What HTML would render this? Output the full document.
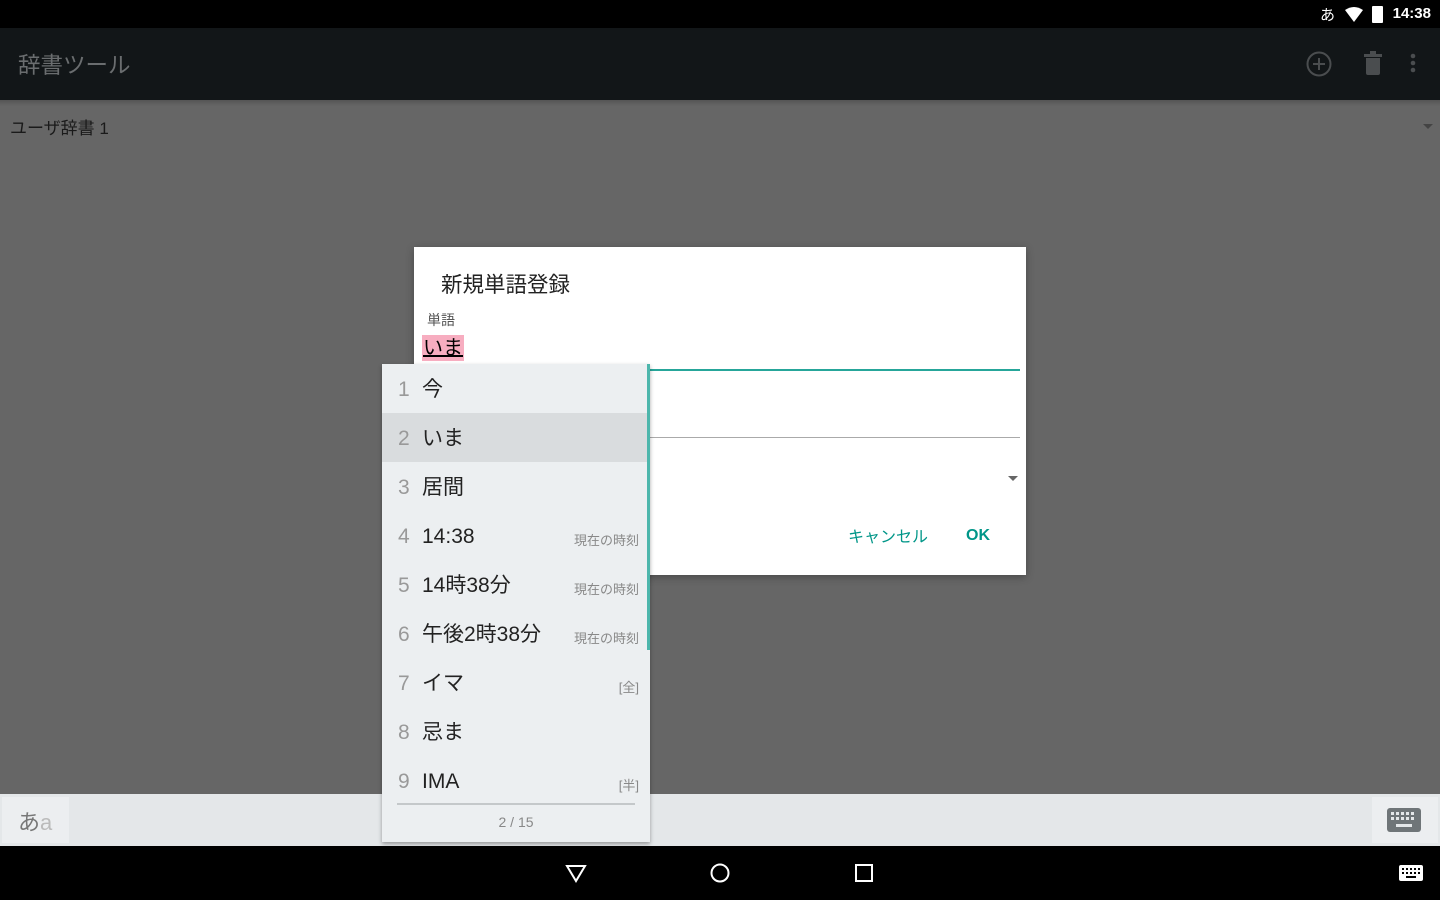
<!DOCTYPE html>
<html><head><meta charset="utf-8"><style>
*{margin:0;padding:0;box-sizing:border-box}
body{width:1440px;height:900px;position:relative;overflow:hidden;background:#666;font-family:"Liberation Sans","Noto Sans CJK JP",sans-serif}
.a{position:absolute}
</style></head><body>
<div class="a" style="left:0;top:0;width:1440px;height:28px;background:#000"></div>
<div class="a" style="right:9px;top:5px;color:#fff;font-size:15px;font-weight:bold">14:38</div>
<div class="a" style="left:1320px;top:4px;color:#fff;font-size:15px">あ</div>
<svg class="a" style="left:1344px;top:7px" width="20" height="16"><path d="M1 3 Q10 -3 19 3 L10 15Z" fill="#fff"/></svg>
<div class="a" style="left:1372px;top:6px;width:11px;height:17px;background:#fff;border-radius:1px"></div>
<div class="a" style="left:0;top:28px;width:1440px;height:72px;background:#121618"></div>
<div class="a" style="left:18px;top:48px;color:#6a6d6f;font-size:22.5px">辞書ツール</div>
<svg class="a" style="left:1305px;top:50px" width="28" height="28"><circle cx="14" cy="14" r="11.5" fill="none" stroke="#4a4d4f" stroke-width="2"/><path d="M14 8v12M8 14h12" stroke="#4a4d4f" stroke-width="2"/></svg>
<svg class="a" style="left:1362px;top:49px" width="22" height="28"><path d="M8 2h6v3h6v3H2V5h6z M4 9h14v15a2 2 0 0 1-2 2H6a2 2 0 0 1-2-2z" fill="#4a4d4f"/></svg>
<svg class="a" style="left:1408px;top:52px" width="10" height="24"><circle cx="5" cy="4" r="2.3" fill="#4a4d4f"/><circle cx="5" cy="11" r="2.3" fill="#4a4d4f"/><circle cx="5" cy="18" r="2.3" fill="#4a4d4f"/></svg>
<div class="a" style="left:0;top:100px;width:1440px;height:6px;background:linear-gradient(#555,#666)"></div>
<div class="a" style="left:10px;top:114px;color:#1a1a1a;font-size:17px">ユーザ辞書 1</div>
<div class="a" style="left:1423px;top:124px;width:0;height:0;border-left:5px solid transparent;border-right:5px solid transparent;border-top:5px solid #444"></div>

<div class="a" style="left:414px;top:247px;width:612px;height:328px;background:#fff;box-shadow:0 2px 8px rgba(0,0,0,.3)"></div>
<div class="a" style="left:441px;top:268px;color:#222;font-size:21.5px">新規単語登録</div>
<div class="a" style="left:427px;top:310px;color:#555;font-size:14px">単語</div>
<div class="a" style="left:422px;top:335px;height:26px;padding:0 1px;background:#f7adc0;color:#000;font-size:20px;line-height:26px;text-decoration:underline">いま</div>
<div class="a" style="left:648px;top:369px;width:372px;height:2px;background:#26a69a"></div>
<div class="a" style="left:648px;top:437px;width:372px;height:1px;background:#aaa"></div>
<div class="a" style="left:1008px;top:476px;width:0;height:0;border-left:5px solid transparent;border-right:5px solid transparent;border-top:5px solid #666"></div>
<div class="a" style="left:848px;top:523px;color:#009688;font-size:16px">キャンセル</div>
<div class="a" style="left:966px;top:527px;color:#009688;font-size:16px;font-weight:bold">OK</div>

<div class="a" style="left:0;top:794px;width:1440px;height:52px;background:#e4e7e9"></div>
<div class="a" style="left:2px;top:797px;width:67px;height:46px;background:#eceef0"></div>
<div class="a" style="left:18px;top:805px;font-size:22px;color:#777">あ<span style="color:#bbb">a</span></div>
<div class="a" style="left:1372px;top:797px;width:66px;height:46px;background:#eceef0"></div>
<svg class="a" style="left:1387px;top:808px" width="34" height="24"><rect width="34" height="24" rx="3" fill="#6f7578"/><g fill="#e4e7e9"><rect x="4" y="4" width="3" height="3"/><rect x="9" y="4" width="3" height="3"/><rect x="14" y="4" width="3" height="3"/><rect x="19" y="4" width="3" height="3"/><rect x="24" y="4" width="3" height="3"/><rect x="4" y="9" width="3" height="3"/><rect x="9" y="9" width="3" height="3"/><rect x="14" y="9" width="3" height="3"/><rect x="19" y="9" width="3" height="3"/><rect x="24" y="9" width="3" height="3"/><rect x="9" y="16" width="16" height="3"/></g></svg>

<div class="a" style="left:382px;top:364px;width:268px;height:478px;background:#eceff1;box-shadow:0 2px 4px rgba(0,0,0,.35)"></div>
<div class="a" style="left:382px;top:413px;width:265px;height:49px;background:#d9dcde"></div>
<div class="a" style="left:647px;top:364px;width:3px;height:286px;background:#4db6ac"></div>
<div class="a" style="left:382px;top:365px;width:265px;font-size:21px;color:#222">
<div style="position:relative;height:49px;line-height:49px"><span style="position:absolute;left:16px;color:#999">1</span><span style="position:absolute;left:40px">今</span></div>
<div style="position:relative;height:49px;line-height:49px"><span style="position:absolute;left:16px;color:#999">2</span><span style="position:absolute;left:40px">いま</span></div>
<div style="position:relative;height:49px;line-height:49px"><span style="position:absolute;left:16px;color:#999">3</span><span style="position:absolute;left:40px">居間</span></div>
<div style="position:relative;height:49px;line-height:49px"><span style="position:absolute;left:16px;color:#999">4</span><span style="position:absolute;left:40px">14:38</span><span style="position:absolute;right:8px;top:4px;font-size:13px;color:#888">現在の時刻</span></div>
<div style="position:relative;height:49px;line-height:49px"><span style="position:absolute;left:16px;color:#999">5</span><span style="position:absolute;left:40px">14時38分</span><span style="position:absolute;right:8px;top:4px;font-size:13px;color:#888">現在の時刻</span></div>
<div style="position:relative;height:49px;line-height:49px"><span style="position:absolute;left:16px;color:#999">6</span><span style="position:absolute;left:40px">午後2時38分</span><span style="position:absolute;right:8px;top:4px;font-size:13px;color:#888">現在の時刻</span></div>
<div style="position:relative;height:49px;line-height:49px"><span style="position:absolute;left:16px;color:#999">7</span><span style="position:absolute;left:40px">イマ</span><span style="position:absolute;right:8px;top:4px;font-size:13px;color:#888">[全]</span></div>
<div style="position:relative;height:49px;line-height:49px"><span style="position:absolute;left:16px;color:#999">8</span><span style="position:absolute;left:40px">忌ま</span></div>
<div style="position:relative;height:49px;line-height:49px"><span style="position:absolute;left:16px;color:#999">9</span><span style="position:absolute;left:40px">IMA</span><span style="position:absolute;right:8px;top:4px;font-size:13px;color:#888">[半]</span></div>
</div>
<div class="a" style="left:397px;top:803px;width:238px;height:2px;background:#c4c8ca"></div>
<div class="a" style="left:382px;top:814px;width:268px;text-align:center;font-size:14px;color:#888">2 / 15</div>

<div class="a" style="left:0;top:846px;width:1440px;height:54px;background:#000"></div>
<svg class="a" style="left:564px;top:862px" width="24" height="22"><path d="M3 4h18L12 19z" fill="none" stroke="#fff" stroke-width="2"/></svg>
<svg class="a" style="left:708px;top:861px" width="24" height="24"><circle cx="12" cy="12" r="8.5" fill="none" stroke="#fff" stroke-width="2"/></svg>
<svg class="a" style="left:853px;top:862px" width="22" height="22"><rect x="3" y="3" width="16" height="16" fill="none" stroke="#fff" stroke-width="2"/></svg>
<svg class="a" style="left:1399px;top:865px" width="24" height="16"><rect width="24" height="16" rx="2" fill="#fff"/><g fill="#000"><rect x="3" y="3" width="2" height="2"/><rect x="7" y="3" width="2" height="2"/><rect x="11" y="3" width="2" height="2"/><rect x="15" y="3" width="2" height="2"/><rect x="19" y="3" width="2" height="2"/><rect x="3" y="7" width="2" height="2"/><rect x="7" y="7" width="2" height="2"/><rect x="11" y="7" width="2" height="2"/><rect x="15" y="7" width="2" height="2"/><rect x="19" y="7" width="2" height="2"/><rect x="7" y="11" width="10" height="2"/></g></svg>
</body></html>
